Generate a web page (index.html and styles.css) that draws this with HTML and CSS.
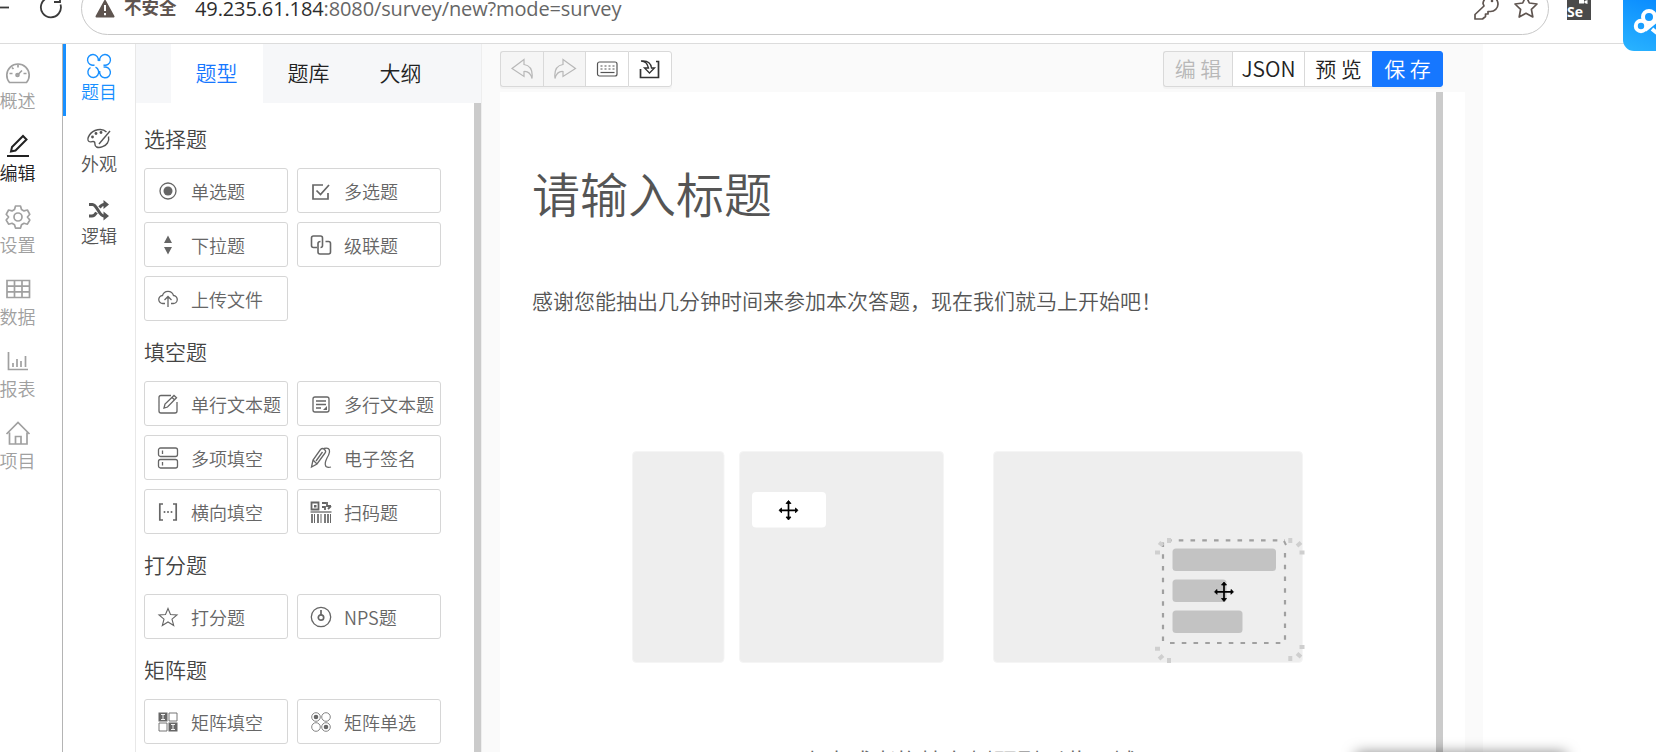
FILE: index.html
```html
<!DOCTYPE html>
<html lang="zh-CN">
<head>
<meta charset="utf-8">
<title>Survey</title>
<link rel="stylesheet" href="styles.css">
</head>
<body>
<header class="browser">
  <svg class="nav-ctl" width="81" height="43" viewBox="0 0 81 43" fill="none" stroke="#3a3a3a" stroke-width="1.8"><path d="M0 7.500h9"/><path d="M60.500 4.500a10 10 0 1 1-4-5.500M60 -4v6h-6"/></svg>
  <div class="address">
    <svg class="warn" width="20" height="18" viewBox="0 0 20 18"><path d="M10 1 18.500 16.500H1.500Z" fill="#5f5550" stroke="#5f5550" stroke-width="2" stroke-linejoin="round"/><path d="M10 5v6M10 13v2.200" stroke="#fff" stroke-width="2"/></svg>
    <b class="unsafe">不安全</b>
    <span class="url"><span class="host">49.235.61.184</span>:8080/survey/new?mode=survey</span>
    <svg class="key" width="26" height="28" viewBox="0 0 26 28" fill="none" stroke="#5f5550" stroke-width="1.700" stroke-linejoin="round"><path d="M10 10.500A7.500 7.500 0 1 1 17.500 18.500L15 18.500V21H12.500V23.500L9.500 26H2V21.500L11 13Z"/><circle cx="19" cy="8" r="1.300" fill="#5f5550" stroke="none"/></svg>
    <svg class="fav" width="24" height="24" viewBox="0 0 24 24" fill="none" stroke="#5f5550" stroke-width="1.700" stroke-linejoin="round"><path d="m12 1 3.300 7 7.700 1-5.600 5.300 1.400 7.700-6.800-3.700L5.200 22l1.400-7.700L1 9l7.700-1Z"/></svg>
  </div>
  <div class="ext"><svg width="24" height="5" viewBox="0 0 24 5"><path d="M12 0h5v3.500h-5ZM17.500 1l3-1v4l-3-1Z" fill="#fff"/></svg>Se</div>
</header>
<div class="float-logo"><svg width="33" height="51" viewBox="0 0 33 51" fill="none" stroke="#fff" stroke-width="4"><circle cx="18" cy="26" r="5.200"/><circle cx="26" cy="17" r="6"/><path d="M22 30 34 20M29 29l5 4"/></svg></div>

<div class="app">
  <nav class="primary">
    <a class="item"><svg width="26" height="26" viewBox="0 0 26 26" fill="none" stroke="currentColor" stroke-width="1.700"><path d="M4.500 22.500A11.200 11.200 0 1 1 21.500 22.500Z"/><path d="m12 15.500 5-5M13 4.500v3M4.500 13.500h3M18.500 13.500h3M7 7.500l1.500 1.500"/><circle cx="12.500" cy="15" r="1.500"/></svg><span>概述</span></a>
    <a class="item on"><svg width="26" height="26" viewBox="0 0 26 26" fill="none" stroke="currentColor" stroke-width="2"><path d="M6 19.500 7 15 18 4l3.500 3.500L10.500 18.500ZM2 24h22"/></svg><span>编辑</span></a>
    <a class="item"><svg width="26" height="26" viewBox="0 0 26 26" fill="none" stroke="currentColor" stroke-width="1.700" stroke-linejoin="round"><path d="m10.500 2h5l1 3.500 2.500 1.400 3.400-.9 2.400 4.300-2.400 2.700 2.400 3-2.400 4.200-3.400-.9-2.500 1.500-1 3.300h-5l-1-3.300L7 19.300l-3.400.9L1.200 16l2.400-3-2.400-2.700L3.600 6l3.400.9 2.500-1.400Z"/><circle cx="13" cy="13" r="4"/></svg><span>设置</span></a>
    <a class="item"><svg width="26" height="26" viewBox="0 0 26 26" fill="none" stroke="currentColor" stroke-width="1.700"><path d="M2 4.500h22.500v17H2ZM2 10.200h22.500M2 15.800h22.500M9.500 4.500v17M17 4.500v17"/></svg><span>数据</span></a>
    <a class="item"><svg width="26" height="26" viewBox="0 0 26 26" fill="none" stroke="currentColor" stroke-width="1.700"><path d="M3.500 4v17.500H23M8 19v-4M12 19V11M16 19v-6M20.500 19V8"/></svg><span>报表</span></a>
    <a class="item"><svg width="26" height="26" viewBox="0 0 26 26" fill="none" stroke="currentColor" stroke-width="1.700"><path d="M1.500 14 13 2.500 24.500 14M4.500 12.500V24H22V12.500M10.500 24v-7.500H16V24"/></svg><span>项目</span></a>
  </nav>
  <nav class="secondary">
    <a class="item on"><svg width="26" height="26" viewBox="0 0 26 26" fill="none" stroke="currentColor" stroke-width="1.400"><path d="M8.500 12A5.400 5.400 0 1 1 12.200 8M17.500 12A5.400 5.400 0 1 0 13.800 8M4.500 14.500A5.400 5.400 0 1 0 9.500 14.200M17.500 14.200A5.400 5.400 0 1 1 13.800 18"/></svg><span>题目</span></a>
    <a class="item"><svg width="26" height="26" viewBox="0 0 26 26" fill="none" stroke="currentColor" stroke-width="1.400"><path d="M20.500 7C16 2.500 7 4.500 3.500 10c-2 3-2 5.500-.5 6.500 2 1.300 4-1 5.500.5 1 1.500-.5 3.500 2 5 3.500 1.500 9-1 11-4 1.500-2.500 1.500-4.500 1-6.500"/><path d="m24 6-11 13"/><g fill="currentColor" stroke="none"><circle cx="6.500" cy="12" r="1.400"/><circle cx="10" cy="8.500" r="1.400"/><circle cx="15" cy="7.500" r="1.400"/></g></svg><span>外观</span></a>
    <a class="item"><svg width="26" height="26" viewBox="0 0 26 26" fill="none" stroke="currentColor" stroke-width="3"><path d="M3 7.500h3.500C11 7.500 13 19 18 19h2M3 19h3c2 0 3.300-1.500 4.500-3.500M13.500 10.500C15 8.500 16 7.500 18 7.500h2"/><path d="m17.500 3 5.500 4.500-5.500 4.500ZM17.500 14.500l5.500 4.500-5.500 4.500Z" fill="currentColor" stroke="none"/></svg><span>逻辑</span></a>
  </nav>

  <aside class="palette">
    <div class="tabs"><a class="tab on">题型</a><a class="tab">题库</a><a class="tab">大纲</a></div>
    <div class="list">
      <h3>选择题</h3>
      <div class="grid">
        <a class="q"><svg viewBox="0 0 22 22"><circle cx="11" cy="11" r="8"/><circle class="f" cx="11" cy="11" r="4.500"/></svg>单选题</a>
        <a class="q"><svg viewBox="0 0 22 22"><path d="M13 5H3v14h15v-6M6.500 10.500l4 4L19 5" stroke-width="1.700"/></svg>多选题</a>
        <a class="q"><svg viewBox="0 0 22 22"><path class="f" d="m11 1.500 4 7.500H7ZM11 20.500l4-7.500H7Z"/></svg>下拉题</a>
        <a class="q"><svg viewBox="0 0 22 22"><path d="M7 13.500H3.500Q1.500 13.500 1.500 11.500V4Q1.500 2 3.500 2H10.500Q12.500 2 12.500 4V11.500Q12.500 13.500 10.500 13.500M10.500 7.500Q8 7.500 8 9.500V18Q8 20 10 20H18.500Q20.500 20 20.500 18V9.500Q20.500 7.500 18.500 7.500H15.500" stroke-width="1.600"/></svg>级联题</a>
        <a class="q"><svg viewBox="0 0 22 22"><path d="M8 15.500H6a4 4 0 0 1-.5-8 5.700 5.700 0 0 1 11 0 4 4 0 0 1-.5 8h-2M11 19V9M7.500 12 11 8.500 14.500 12"/></svg>上传文件</a>
      </div>
      <h3>填空题</h3>
      <div class="grid">
        <a class="q"><svg viewBox="0 0 22 22"><path d="M14 2.500H4Q2 2.500 2 4.500V18Q2 20 4 20H18Q20 20 20 18V9M7 15l1-4L17 2.500l2.500 2.300L10.500 14ZM15 4.500l2.500 2.300"/></svg>单行文本题</a>
        <a class="q"><svg viewBox="0 0 22 22"><rect x="3" y="4" width="16" height="15" rx="2"/><path d="M6 8h10M6 11.500h10M6 15h5"/><path class="f" d="M13 17 17 13v4Z"/></svg>多行文本题</a>
        <a class="q"><svg viewBox="0 0 22 22"><rect x="1.500" y="1" width="19" height="8.500" rx="2"/><rect x="1.500" y="12.500" width="19" height="8.500" rx="2"/><path d="M5.500 3.500v3.500M5.500 15v3.500"/></svg>多项填空</a>
        <a class="q"><svg viewBox="0 0 22 22"><path d="M1.500 20 3 13 10.500 2.500Q12.500 .5 14.500 2.500T15 6L7 17Z M3 13l4 4M6 14l6.500-9"/><path d="M14 1.500Q20 0 19.500 5q-.5 3-2.500 6-3 6-1 8.500 2 1.500 5 .5"/></svg>电子签名</a>
        <a class="q"><svg viewBox="0 0 22 22"><path d="M6 3H2.800V19H6M16 3h3.200V19H16" stroke-width="1.700"/><g class="f"><circle cx="7.500" cy="11" r="1"/><circle cx="11" cy="11" r="1"/><circle cx="14.500" cy="11" r="1"/></g></svg>横向填空</a>
        <a class="q"><svg viewBox="0 0 22 22"><path d="M1.500 1.500h7v7h-7ZM12 2h4M12 6h3v3M17 1v4h4M18 8l3-3" stroke-width="1.800"/><path class="f" d="M4 4h2.500v2.500H4Z"/><path d="M.5 11h21"/><path d="M2 13v9M8 13v9M15 13v9M18 13v9" stroke-width="1.700"/><path d="M4.500 13v9M11 13v9M20.500 13v9" stroke-width="1"/></svg>扫码题</a>
      </div>
      <h3>打分题</h3>
      <div class="grid">
        <a class="q"><svg viewBox="0 0 22 22"><path d="m11 2.500 2.500 6 6.500.5-5 4.200 1.700 6.300L11 16l-5.700 3.500L7 13.200 2 9l6.500-.5Z" stroke-width="1.100"/></svg>打分题</a>
        <a class="q"><svg viewBox="0 0 22 22"><circle cx="11" cy="11" r="9.700"/><circle cx="11" cy="11.500" r="2.700" stroke-width="1.700"/><path d="M11 9V4" stroke-width="1.700"/></svg>NPS题</a>
      </div>
      <h3>矩阵题</h3>
      <div class="grid">
        <a class="q"><svg viewBox="0 0 22 22"><path class="f" d="M1.500 1.500h9v9h-9ZM11.500 11.500h9v9h-9Z"/><path d="M12 2h8v8h-8ZM2 12h8v8H2Z" stroke-width=".9"/><path d="M4 3.500h4M6 3.500v5M4 8.500h4M14 13.500h4M16 13.500v5M14 18.500h4" stroke="#fff" stroke-width=".9"/></svg>矩阵填空</a>
        <a class="q"><svg viewBox="0 0 22 22"><g stroke-width=".8"><circle cx="6" cy="6" r="4.300"/><circle cx="16" cy="6" r="4.300"/><circle cx="6" cy="16" r="4.300"/><circle cx="16" cy="16" r="4.300"/></g><circle class="f" cx="6" cy="6" r="2.300"/><circle class="f" cx="16" cy="16" r="2.300"/></svg>矩阵单选</a>
      </div>
    </div>
  </aside>

  <main class="work">
    <div class="toolbar">
      <div class="btns">
        <span class="b off w43"><svg width="24" height="24" viewBox="0 0 24 24" fill="none" stroke="currentColor" stroke-width="1.200"><path d="M14 2.500 2 11.500 14 19.500V14.500Q20 14 22 21.500 23.500 9 14 7.500Z"/></svg></span>
        <span class="b off w42"><svg width="24" height="24" viewBox="0 0 24 24" fill="none" stroke="currentColor" stroke-width="1.200"><path d="M10 2.500 22.500 11.500 10 19.500V14.500Q4 14 2 21.500 .5 9 10 7.500Z"/></svg></span>
        <span class="b w43"><svg width="24" height="24" viewBox="0 0 24 24" fill="none" stroke="#555" stroke-width="1.200"><rect x="2.500" y="5" width="19.500" height="14" rx="2"/><path d="M5.500 9h14M5.500 12h14" stroke-dasharray="2 2"/><path d="M5.500 15.500h14"/></svg></span>
        <span class="b w44"><svg width="24" height="24" viewBox="0 0 24 24" fill="none" stroke="#333" stroke-width="1.700"><path d="M18 4.500h2.500V20.500H2.500V12"/><path d="M3 4q6 0 7.500 7H6.500L11.500 16l5-5h-3Q12.500 3 3 4Z" stroke-width="1.300"/></svg></span>
      </div>
      <div class="btns">
        <span class="b off w69">编 辑</span><span class="b w72">JSON</span><span class="b w68">预 览</span><span class="b save">保 存</span>
      </div>
    </div>
    <div class="paper">
      <h1>请输入标题</h1>
      <p class="intro">感谢您能抽出几分钟时间来参加本次答题，现在我们就马上开始吧！</p>
      <svg class="art" width="680" height="218" viewBox="630 448 680 218">
        <g fill="#eee" stroke="#f5f5f5"><rect x="632.500" y="451.500" width="91.500" height="211" rx="4"/><rect x="739.500" y="451.500" width="204" height="211" rx="4"/><rect x="993.500" y="451.500" width="309" height="211" rx="4"/></g>
        <rect x="752" y="492" width="74" height="35.500" rx="4" fill="#fff"/>
        <g fill="#c3c3c3"><rect x="1172.500" y="548.500" width="103.500" height="22.500" rx="3.500"/><rect x="1172.500" y="579.500" width="54" height="22.500" rx="3.500"/><rect x="1172.500" y="610.500" width="70" height="22.500" rx="3.500"/></g>
        <g fill="none" stroke="#a0a0a0" stroke-width="2.200"><path d="M1167 540.300H1285M1170 643H1284" stroke-dasharray="4.600 7.150"/><path d="M1163 542.500V643M1285 553V643" stroke-dasharray="4.600 7.150"/></g><path d="M1284 541l2 4" stroke="#a0a0a0" stroke-width="2"/>
        <g stroke="#cfcfcf" stroke-width="4"><path d="M1155 552.500h5M1159 542.500l4 3M1169 538v5M1290.300 538v5M1297 546l4-3.500M1299.500 552.500h5M1155 648.700h5M1159 659l4-3.500M1169 658v5M1290.300 656v5M1297 653.500l4 3.500M1299.500 647h5"/></g>
        <g id="m1" fill="none" stroke="#000" stroke-width="1.700"><path d="M788.500 502v17M780 510.300h17"/><path d="m786 503.500 2.500-3 2.500 3ZM786 517l2.500 3 2.500-3ZM781.500 508l-2.500 2.300 2.500 2.500ZM795.500 508l2.500 2.300-2.500 2.500Z" fill="#000" stroke-width=".8"/></g>
        <use href="#m1" x="435.500" y="81.500"/>
      </svg>
      <p class="hint">点击或者拖拽左侧题型到此区域</p>
      <i class="thumb"></i>
    </div>
  </main>
</div>
<div class="popup-edge"></div>
</body>
</html>
```
FILE: styles.css
```css
* { box-sizing: border-box; }
html, body { margin: 0; height: 752px; overflow: hidden; }
body { position: relative; background: #fff; color: #555; font: 350 18px "Noto Sans CJK SC DemiLight", "Noto Sans CJK SC", sans-serif; }
svg { display: block; flex: none; }

.browser { display: flex; height: 44px; border-bottom: 1px solid #dcdcdc; overflow: hidden; }
.nav-ctl { overflow: visible; }
.address { display: flex; align-items: center; width: 1468px; height: 53px; margin-top: -18px; padding: 0 10px 0 13px; border: 1px solid #c8c8c8; border-radius: 27px; }
.unsafe { margin: -3px 0 0 9px; font: 700 17.5px/26px "Noto Sans CJK SC", sans-serif; color: #5f5550; width: 71px; }
.url { font: 400 20px/28px "Open Sans", sans-serif; letter-spacing: -.12px; color: #666; white-space: nowrap; margin-top: 1px; }
.host { color: #2c2c2c; }
.key { margin: -3px 15px 0 auto; }
.fav { margin: -3px 0 0; }
.ext { width: 24px; height: 20px; margin: 0 0 0 18px; background: #4a4a4a; color: #fff; font: 700 14px/14px "Open Sans", sans-serif; text-indent: 2px; }
.float-logo { position: absolute; right: 0; top: 0; width: 33px; height: 51px; border-radius: 0 0 0 11px; background: linear-gradient(200deg, #0a8cff, #2ab4ff); }

.app { display: flex; height: 708px; overflow: hidden; }
.primary { width: 63px; flex: none; border-right: 1px solid #b4b4b4; color: #a0a0a0; }
.secondary { width: 73px; flex: none; border-right: 1px solid #e8e8e8; color: #555; }
.item { display: flex; flex-direction: column; align-items: center; height: 72px; font-size: 18px; line-height: 26px; }
.primary .item { width: 36px; padding-top: 16px; gap: 1px; }
.primary .item span { margin-left: -1px; }
.primary .on { color: #222; }
.secondary .item { padding: 9px 0 0; }
.secondary .item span { margin-top: -1px; }
.secondary .on { color: #1890ff; box-shadow: inset 3px 0 #1890ff; }

.palette { display: flex; flex: none; flex-direction: column; width: 346px; border-right: 1px solid #eee; }
.tabs { display: flex; flex: none; height: 59px; padding-left: 35px; background: #f6f7f9; }
.tab { width: 92px; text-align: center; font-size: 21px; line-height: 57px; color: #222; font-weight: 400; text-indent: -1px; }
.tab.on { background: #fff; color: #1677ff; font-weight: 500; }
.list { flex: 1; min-height: 0; padding: 5px 33px 0 8px; border-right: 7px solid #cbcbcb; overflow: hidden; }
h3 { height: 60px; margin: 0; padding-top: 15px; font-size: 21px; line-height: 31px; font-weight: 350; color: #444; }
.grid { display: grid; grid-template-columns: 144px 144px; gap: 9px; }
.q { display: flex; align-items: center; height: 45px; padding: 1px 0 0 12px; border: 1px solid #d6d6d6; border-radius: 3px; gap: 12px; color: #666; white-space: nowrap; }
.q svg { width: 22px; height: 22px; fill: none; stroke: #666; stroke-width: 1.3; }
.q svg .f { fill: #666; stroke: none; }

.work { width: 1001px; flex: none; background: #fafafa; padding: 7px 18px 0 18px; }
.toolbar { display: flex; justify-content: space-between; padding-right: 22px; height: 41px; }
.btns { display: flex; height: 36px; border-radius: 3px; box-shadow: 0 2px 0 #f3f3f3; }
.b { display: flex; align-items: center; justify-content: center; border: 1px solid #d9d9d9; border-right: 0; background: #fff; color: #222; font-size: 21px; line-height: 30px; padding-bottom: 2px; white-space: pre; font-weight: 350; }
.b:first-child { border-radius: 3px 0 0 3px; }
.b:last-child { border-right: 1px solid #d9d9d9; border-radius: 0 3px 3px 0; }
.b svg { margin-top: 2px; }
.off { background: #f5f5f5; color: #b8b8b8; }
.w42 { width: 42px; } .w43 { width: 43px; } .w44 { width: 44px; } .w69 { width: 69px; } .w72 { width: 72px; } .w68 { width: 68px; }
.b.save { width: 71px; background: #1677ff; border-color: #1677ff; color: #fff; }
.paper { position: relative; height: 660px; background: #fff; padding: 65px 27px 0 32px; overflow: hidden; }
h1 { margin: 0; font-size: 48px; line-height: 70px; font-weight: 400; }
.intro { margin: 57px 0 0; font-size: 21px; line-height: 32px; }
.art { margin: 132px 0 0 98px; }
.hint { width: 937px; margin: 77px 0 0 -32px; font-size: 24px; line-height: 36px; text-align: center; color: #666; }
.thumb { position: absolute; top: 0; right: 22px; width: 7px; height: 100%; background: #cbcbcb; }
.popup-edge { position: absolute; left: 1356px; top: 753px; width: 210px; height: 20px; box-shadow: 0 0 14px rgba(0,0,0,.5); }
```
